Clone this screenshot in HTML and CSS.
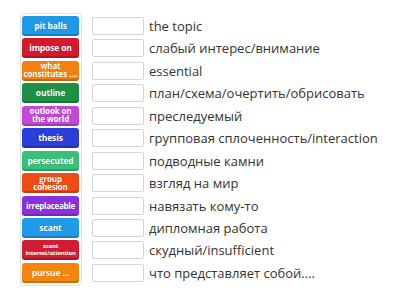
FILE: index.html
```html
<!DOCTYPE html>
<html>
<head>
<meta charset="utf-8">
<link rel="stylesheet" href="styles.css">
</head>
<body>
<div class="wrap">
  <div class="bank">
    <div class="tile c1">pit balls</div>
    <div class="tile c2">impose on</div>
    <div class="tile c3 two">what constitutes ....</div>
    <div class="tile c4">outline</div>
    <div class="tile c5 two">outlook on the world</div>
    <div class="tile c6">thesis</div>
    <div class="tile c7">persecuted</div>
    <div class="tile c8 two">group cohesion</div>
    <div class="tile c9 narrow">irreplaceable</div>
    <div class="tile c10">scant</div>
    <div class="tile c11 tiny">scant interest/attention</div>
    <div class="tile c12">pursue ...</div>
  </div>
  <div class="rows">
    <div class="row"><span class="box"></span><span class="def">the topic</span></div>
    <div class="row"><span class="box"></span><span class="def">слабый интерес/внимание</span></div>
    <div class="row"><span class="box"></span><span class="def">essential</span></div>
    <div class="row"><span class="box"></span><span class="def">план/схема/очертить/обрисовать</span></div>
    <div class="row"><span class="box"></span><span class="def">преследуемый</span></div>
    <div class="row"><span class="box"></span><span class="def">групповая сплоченность/interaction</span></div>
    <div class="row"><span class="box"></span><span class="def">подводные камни</span></div>
    <div class="row"><span class="box"></span><span class="def">взгляд на мир</span></div>
    <div class="row"><span class="box"></span><span class="def">навязать кому-то</span></div>
    <div class="row"><span class="box"></span><span class="def">дипломная работа</span></div>
    <div class="row"><span class="box"></span><span class="def">скудный/insufficient</span></div>
    <div class="row"><span class="box"></span><span class="def">что представляет собой....</span></div>
  </div>
</div>
</body>
</html>
```
FILE: styles.css
```css
html, body {
  margin: 0;
  padding: 0;
  background: #fff;
  width: 400px;
  height: 300px;
  overflow: hidden;
}
.wrap {
  display: flex;
  align-items: flex-start;
  padding: 13px 0 0 20px;
  font-family: "Open Sans", "Noto Sans", sans-serif;
}
.bank {
  display: flex;
  flex-direction: column;
  gap: 2.45px;
  padding: 2px 2px 2px 1px;
  border: 1px solid #e3e3e3;
  border-radius: 4px;
}
.tile {
  width: 57px;
  height: 20px;
  box-sizing: border-box;
  border-radius: 3px;
  display: flex;
  align-items: center;
  justify-content: center;
  text-align: center;
  color: #fff;
  font-weight: 700;
  font-size: 8.5px;
  line-height: 9px;
  letter-spacing: -0.15px;
  box-shadow: inset 0 -2px 0 rgba(0,0,0,0.18);
  text-shadow: 0 0 1px rgba(0,0,0,0.25);
  padding: 0 1px 1px;
  overflow: hidden;
}
.tile.two { font-size: 8px; line-height: 8px; }
.tile.narrow { font-size: 8px; letter-spacing: -0.3px; }
.tile.tiny { font-size: 6px; line-height: 6.5px; letter-spacing: -0.25px; }
.c1 { background: #1f98e6; }
.c2 { background: #d4192c; }
.c3 { background: #f5800f; }
.c4 { background: #1f8f45; }
.c5 { background: #c447d6; }
.c6 { background: #2b3fd6; }
.c7 { background: #38c07a; }
.c8 { background: #ef4b12; }
.c9 { background: #8b2fdf; }
.c10 { background: #1f9ae8; }
.c11 { background: #d01d34; }
.c12 { background: #f6850e; }
.rows {
  display: flex;
  flex-direction: column;
  gap: 2.45px;
  padding-top: 3px;
  margin-left: 10px;
}
.row {
  height: 20px;
  display: flex;
  align-items: center;
}
.box {
  width: 52px;
  height: 18px;
  box-sizing: border-box;
  border: 1px solid #d4d4d4;
  border-radius: 2px;
  background: #fff;
  flex: none;
}
.def {
  margin-left: 5px;
  font-size: 13px;
  color: #333;
  white-space: nowrap;
}
```
